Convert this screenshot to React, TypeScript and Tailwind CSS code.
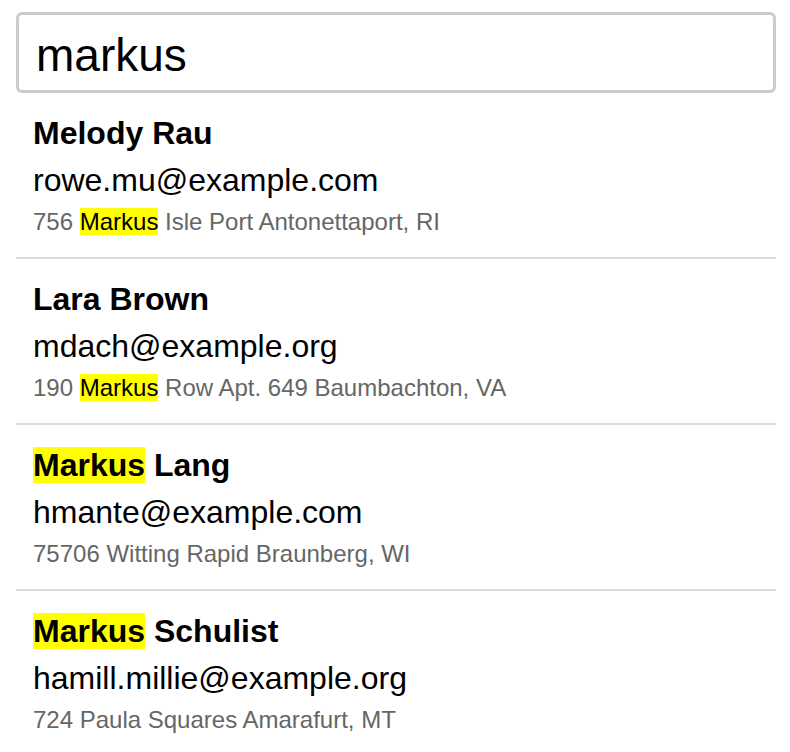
const QUERY = "markus";

const PEOPLE = [
  { name: "Melody Rau", email: "rowe.mu@example.com", address: "756 Markus Isle Port Antonettaport, RI" },
  { name: "Lara Brown", email: "mdach@example.org", address: "190 Markus Row Apt. 649 Baumbachton, VA" },
  { name: "Markus Lang", email: "hmante@example.com", address: "75706 Witting Rapid Braunberg, WI" },
  { name: "Markus Schulist", email: "hamill.millie@example.org", address: "724 Paula Squares Amarafurt, MT" },
];

function Highlight({ text }: { text: string }) {
  const re = new RegExp(`(${QUERY})`, "ig");
  const parts = text.split(re);
  return (
    <>
      {parts.map((part, i) =>
        part.toLowerCase() === QUERY ? (
          <mark key={i} className="bg-[#ffff00] text-black">
            {part}
          </mark>
        ) : (
          <span key={i}>{part}</span>
        ),
      )}
    </>
  );
}

export default function App() {
  return (
    <div className="min-h-screen bg-white pt-3 font-['Liberation_Sans',Arial,sans-serif] text-black">
      <div className="ml-4 w-[760px]">
        <input
          readOnly
          value={QUERY}
          className="block h-[81px] w-full rounded-md border-[3px] border-[#cccccc] px-[17px] pt-[4px] text-[46px] outline-none"
        />
        <ul>
          {PEOPLE.map((p) => (
            <li key={p.email} className="border-b-2 border-[#dddddd] px-[17px] pt-[22px] pb-[21px]">
              <div className="text-[32px] font-bold leading-[37px]">
                <Highlight text={p.name} />
              </div>
              <div className="mt-[10px] text-[32px] leading-[37px]">{p.email}</div>
              <div className="mt-[9px] text-[24px] leading-[28px] text-[#666666]">
                <Highlight text={p.address} />
              </div>
            </li>
          ))}
        </ul>
      </div>
    </div>
  );
}
